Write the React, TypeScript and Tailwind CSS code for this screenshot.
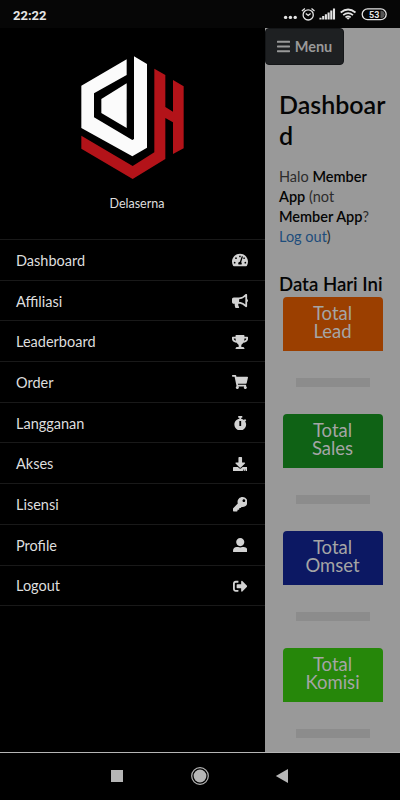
import {
  FaBars,
  FaBullhorn,
  FaDownload,
  FaKey,
  FaShoppingCart,
  FaSignOutAlt,
  FaStopwatch,
  FaTachometerAlt,
  FaTrophy,
  FaUserAlt,
} from "react-icons/fa";

const menu = [
  { label: "Dashboard", icon: FaTachometerAlt, size: "size-4" },
  { label: "Affiliasi", icon: FaBullhorn, size: "size-4" },
  { label: "Leaderboard", icon: FaTrophy, size: "size-4" },
  { label: "Order", icon: FaShoppingCart, size: "size-4" },
  { label: "Langganan", icon: FaStopwatch, size: "size-[14.5px]" },
  { label: "Akses", icon: FaDownload, size: "size-[14.5px]" },
  { label: "Lisensi", icon: FaKey, size: "size-[14.5px]" },
  { label: "Profile", icon: FaUserAlt, size: "size-[14.5px]" },
  { label: "Logout", icon: FaSignOutAlt, size: "size-[14.5px]" },
];

const totals = [
  { name: "Lead", tone: "bg-[#9b3f00]" },
  { name: "Sales", tone: "bg-[#0f6215]" },
  { name: "Omset", tone: "bg-[#0c1863]" },
  { name: "Komisi", tone: "bg-[#26870a]" },
];

export default function App() {
  return (
    <div className="flex h-[800px] w-[400px] flex-col overflow-hidden bg-black font-['Lato',sans-serif]">
      <StatusBar />
      <div className="flex h-[724px] shrink-0">
        <Sidebar />
        <Content />
      </div>
      <NavigationBar />
    </div>
  );
}

function StatusBar() {
  return (
    <header className="flex h-7 shrink-0 items-center justify-between bg-[#060606] pr-[13px] pl-[13px] text-[#e4e4e4]">
      <span className="pt-[2px] font-['Roboto',sans-serif] text-[13px] leading-none font-bold">22:22</span>
      <svg width="104" height="16" viewBox="0 0 104 16" fill="none" stroke="currentColor">
        <g fill="currentColor" stroke="none">
          <circle cx="2.6" cy="11.4" r="1.7" />
          <circle cx="7.4" cy="11.4" r="1.7" />
          <circle cx="12.2" cy="11.4" r="1.7" />
        </g>
        <circle cx="25.2" cy="8.9" r="5.1" strokeWidth="1.3" />
        <path d="M18.900 5 21.900 2.500M31.500 5 28.500 2.500M22.800 7.500l2.400 2 2.400-2" strokeWidth="1.3" />
        <path d="M37.500 13.500v-1.800M40.200 13.500v-3.400M42.900 13.500V8.200M45.600 13.500V6.500M48.300 13.500V4.600M51 13.500V2.500" strokeWidth="2.1" />
        <path d="M57.700 6.500q7.400-6 14.800 0M60.200 9.100q4.900-4 9.800 0M62.500 11.400q2.600-2 5.200 0" strokeWidth="1.7" />
        <path d="M65.100 13.800l-1.700-1.700q1.700-1.200 3.400 0z" fill="currentColor" stroke="none" />
        <rect x="79.200" y="2.900" width="24" height="10.800" rx="5.400" strokeWidth="1.3" />
        <path d="M97.500 4.700h1.500q2.700.8 2.700 3.600T99 11.900h-1.500z" fill="#555" stroke="none" />
        <text x="91.200" y="11.500" textAnchor="middle" fill="currentColor" stroke="none" className="font-['Roboto',sans-serif] text-[9px] font-bold">53</text>
      </svg>
    </header>
  );
}

function Sidebar() {
  return (
    <aside className="w-[265px] shrink-0 bg-black text-[#dedede]">
      <div className="flex h-[211px] flex-col items-center pt-7">
        <Logo />
        <p className="mt-[15px] pl-[9px] text-[12.5px] leading-[18px]">Delaserna</p>
      </div>
      <ul className="border-b border-[#191919]">
        {menu.map(({ label, icon: Icon, size }) => (
          <li key={label} className="flex h-[40.7px] items-center justify-between border-t border-[#191919] pt-px pr-[17px] pl-4 text-[14.5px]">
            <span className="pt-px">{label}</span>
            <span className="flex w-4 justify-center text-[#d2d2d2]">
              <Icon className={size} />
            </span>
          </li>
        ))}
      </ul>
    </aside>
  );
}

function Logo() {
  return (
    <svg width="103" height="124" viewBox="33 33 309 372">
      <path fill="#fbfbfb" d="M170 43 34 122v127l153 85 44-26V57l-39-23v248l-5 3-115-68v-72l98-55z" />
      <path fill="#fbfbfb" d="M170 115 94 162v42l76 45z" />
      <path fill="#b31319" d="M34 272 188 363l65-41V71l33 19v96l23 14v-95l32 19v186l-32 17v-95l-23-13v123l-98 60-154-91z" />
    </svg>
  );
}

function Content() {
  return (
    <main className="w-[135px] shrink-0 overflow-hidden bg-[#999]">
      <button className="flex h-[37px] w-[79px] items-center justify-center gap-[5px] rounded border border-[#141618] bg-[#1e2022] text-[14.5px] font-bold text-[#999]">
        <FaBars className="h-[15px] w-[13px]" preserveAspectRatio="none" />
        Menu
      </button>
      <div className="pl-3.5">
        <h1 className="mt-6 w-[110px] text-[25px] leading-[31px] font-semibold break-all text-[#050505]">Dashboard</h1>
        <p className="mt-4 w-[106px] text-[14.5px] leading-5 text-[#2c2c2c]">
          Halo <b className="font-semibold text-[#050505]">Member App</b> (not <b className="font-semibold text-[#050505]">Member App</b>?{" "}
          <a className="text-[#1d4d7c]">Log out</a>)
        </p>
        <h2 className="mt-[26px] text-[18.6px] leading-[22px] font-semibold whitespace-nowrap text-[#050505]">Data Hari Ini</h2>
      </div>
      <div className="mt-[2px] ml-[17.5px] w-[100px]">
        {totals.map(({ name, tone }) => (
          <section key={name} className="h-[117px]">
            <h3 className={`${tone} h-[53.5px] rounded-t px-5 pt-[6.5px] text-center text-[18.5px] leading-[18.3px] text-[#a5a5a5]`}>
              Total {name}
            </h3>
            <div className="mx-auto mt-[27.5px] h-[9px] w-[74px] bg-[#8c8c8c]" />
          </section>
        ))}
      </div>
    </main>
  );
}

function NavigationBar() {
  return (
    <nav className="flex h-12 shrink-0 items-center justify-center border-t border-[#b5b5b5] bg-black">
      <svg width="180" height="20" viewBox="0 0 180 20" fill="#b6b6b6">
        <path d="M1 3h12v12H1z" />
        <circle cx="90" cy="9" r="8.3" fill="none" stroke="#b6b6b6" strokeWidth="1.2" />
        <circle cx="90" cy="9" r="6.4" />
        <path d="M165.800 9 178 2v14z" />
      </svg>
    </nav>
  );
}
